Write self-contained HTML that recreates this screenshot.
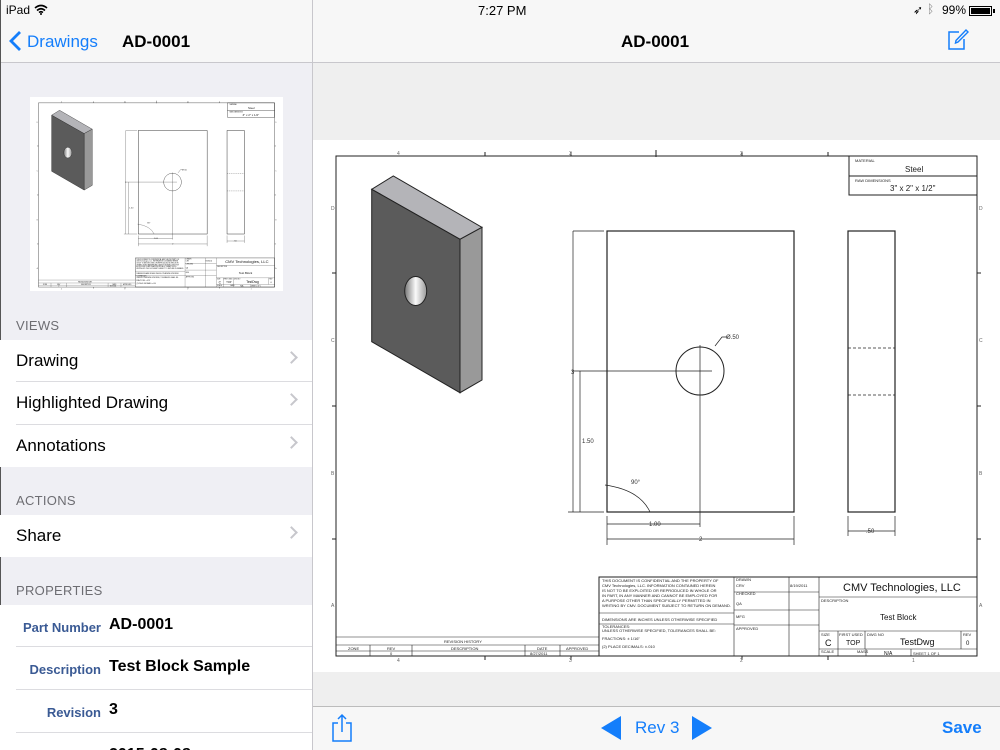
<!DOCTYPE html>
<html><head><meta charset="utf-8"><style>
*{margin:0;padding:0;box-sizing:border-box}
body{width:1000px;height:750px;overflow:hidden;background:#efeff4;font-family:"Liberation Sans",sans-serif;position:relative}
.abs{position:absolute}
#left{left:0;top:0;width:312px;height:750px;background:#efeff4;border-left:1px solid #555}
#div{left:312px;top:0;width:1px;height:750px;background:#c8c7cc}
.row{position:absolute;left:0;width:312px;background:#fff;font-size:17px;color:#000;overflow:hidden}
.row span{position:absolute;left:16px;top:11px}
.chev{position:absolute;right:16px;top:13px;width:9px;height:9px;border-right:2px solid #c7c7cc;border-top:2px solid #c7c7cc;transform:rotate(45deg)}
.sep{position:absolute;left:16px;right:0;bottom:0;height:1px;background:#dcdce0}
.hdr{position:absolute;left:16px;font-size:13px;color:#6d6d72;letter-spacing:.3px}
.lab{position:absolute;right:211px;top:15px;font-size:13px;font-weight:bold;color:#3a5a94}
.val{position:absolute;left:109px;top:11px;font-size:16px;font-weight:bold}
</style></head><body>
<div id="left" class="abs">
 <div class="abs" style="left:0;top:0;width:312px;height:63px;background:#f7f7f7;border-bottom:1px solid #c8c7cc"></div>
</div>
<div id="div" class="abs"></div>
<div class="abs" style="left:313px;top:0;width:687px;height:63px;background:#f7f7f7;border-bottom:1px solid #c8c7cc"></div>
<div class="abs" style="left:313px;top:63px;width:687px;height:644px;background:#efefef"></div>
<div class="abs" style="left:313px;top:140px;width:687px;height:532px;background:#fff"></div>
<div class="abs" style="left:313px;top:706px;width:687px;height:44px;background:#f7f7f7;border-top:1px solid #bcbcbc"></div>
<div class="abs" style="left:30px;top:97px;width:253px;height:194px;background:#fff"></div>

<div class="abs" style="left:6px;top:3px;font-size:12px">iPad</div>
<svg class="abs" style="left:34px;top:4px" width="14" height="11" viewBox="0 0 14 11"><path d="M1 4Q7-1 13 4M3 6.5Q7 3 11 6.5M5 8.5Q7 7 9 8.5" stroke="#000" stroke-width="1.6" fill="none"/><circle cx="7" cy="10" r="1" fill="#000"/></svg>
<div class="abs" style="left:478px;top:3px;font-size:13px">7:27 PM</div>
<div class="abs" style="left:913px;top:3px;font-size:12px">➶</div>
<div class="abs" style="left:927px;top:2px;font-size:12px;color:#888">ᛒ</div>
<div class="abs" style="left:942px;top:3px;font-size:12px">99%</div>
<div class="abs" style="left:969px;top:6px;width:23px;height:10px;border:1px solid #000;padding:1px"><div style="width:100%;height:100%;background:#000"></div></div>
<div class="abs" style="left:993px;top:9px;width:2px;height:4px;background:#000"></div>

<svg class="abs" style="left:8px;top:30px" width="14" height="22"><path d="M12 2L3 11L12 20" stroke="#147efb" stroke-width="2.8" fill="none"/></svg>
<div class="abs" style="left:27px;top:32px;font-size:17px;color:#147efb">Drawings</div>
<div class="abs" style="left:122px;top:32px;font-size:17px;font-weight:bold">AD-0001</div>
<div class="abs" style="left:621px;top:32px;font-size:17px;font-weight:bold">AD-0001</div>
<svg class="abs" style="left:946px;top:28px" width="24" height="24" viewBox="0 0 24 24"><path d="M13 4H3V21H18V11" stroke="#147efb" stroke-width="1.5" fill="none"/><path d="M20 2L22 4L12 14L9.5 15L10 12.5Z" stroke="#147efb" stroke-width="1.4" fill="none"/></svg>

<div class="hdr" style="top:318px">VIEWS</div>
<div class="row" style="top:340px;height:42px"><span>Drawing</span><i class="chev"></i><i class="sep"></i></div>
<div class="row" style="top:382px;height:43px"><span>Highlighted Drawing</span><i class="chev"></i><i class="sep"></i></div>
<div class="row" style="top:425px;height:42px"><span>Annotations</span><i class="chev"></i></div>
<div class="hdr" style="top:493px">ACTIONS</div>
<div class="row" style="top:515px;height:42px"><span>Share</span><i class="chev"></i></div>
<div class="hdr" style="top:583px">PROPERTIES</div>
<div class="row" style="top:605px;height:145px">
 <div class="abs" style="top:0;left:0;width:312px;height:42px"><b class="lab">Part Number</b><b class="val">AD-0001</b><i class="sep"></i></div>
 <div class="abs" style="top:42px;left:0;width:312px;height:43px"><b class="lab">Description</b><b class="val">Test Block Sample</b><i class="sep"></i></div>
 <div class="abs" style="top:85px;left:0;width:312px;height:43px"><b class="lab">Revision</b><b class="val">3</b><i class="sep"></i></div>
 <div class="abs" style="top:128px;left:0;width:312px;height:43px"><b class="val" style="top:13px">2015-08-08</b></div>
</div>

<svg class="abs" style="left:330px;top:713px" width="24" height="30" viewBox="0 0 24 30"><path d="M8 10H3V28H21V10H16M12 2V19M8 6L12 2L16 6" stroke="#147efb" stroke-width="1.5" fill="none"/></svg>
<svg class="abs" style="left:601px;top:716px" width="20" height="24"><path d="M20 0V24L0 12Z" fill="#147efb"/></svg>
<div class="abs" style="left:635px;top:718px;font-size:17px;color:#147efb">Rev 3</div>
<svg class="abs" style="left:692px;top:716px" width="20" height="24"><path d="M0 0V24L20 12Z" fill="#147efb"/></svg>
<div class="abs" style="left:942px;top:718px;font-size:17px;font-weight:bold;color:#147efb">Save</div>

<svg class="abs" style="left:0;top:0" width="1000" height="750" font-family="Liberation Sans">
<defs>
<linearGradient id="hg" x1="0" y1="0" x2="1" y2="0"><stop offset="0" stop-color="#777"/><stop offset=".5" stop-color="#fafafa"/><stop offset="1" stop-color="#999"/></linearGradient>
<g id="dwg" fill="none" stroke="#222" stroke-width="1">
 <rect x="336" y="156" width="641" height="500"/>
 <path d="M485 152V156M571 152V156M656 150V157M742 152V156M828 152V156M485 656V660M571 656V660M742 656V660M828 656V660M332 273H336M332 406H336M332 539H336M977 273H981M977 406H981M977 539H981" />
 <g fill="#666" stroke="none" font-size="5"><text x="397" y="155">4</text><text x="569" y="155">3</text><text x="740" y="155">2</text><text x="397" y="662">4</text><text x="569" y="662">3</text><text x="740" y="662">2</text><text x="912" y="662">1</text><text x="331" y="210">D</text><text x="331" y="342">C</text><text x="331" y="475">B</text><text x="331" y="607">A</text><text x="979" y="210">D</text><text x="979" y="342">C</text><text x="979" y="475">B</text><text x="979" y="607">A</text></g>
 <polygon points="371.7,189.3 393.3,176 482,227.3 460,239.3" fill="#b4b4b8"/>
 <polygon points="460,239.3 482,227.3 482,380 460,392.7" fill="#999"/>
 <polygon points="371.7,189.3 460,239.3 460,392.7 371.7,341.7" fill="#5b5b5b"/>
 <ellipse cx="415.7" cy="291" rx="11" ry="14.5" fill="url(#hg)"/>
 <rect x="607" y="231" width="187" height="281" stroke-width="1.2"/>
 <circle cx="700" cy="371" r="24"/>
 <path d="M573 231H604M573 231V512M568 512H604M580 371V512M572 371H712M700 345V527M607 516V545M794 516V545M607 524H700M607 539H794M605 485Q640 490 650 512M715 346L722 337H728" stroke-width=".7"/>
 <g fill="#333" stroke="none" font-size="6"><text x="582" y="443">1.50</text><text x="649" y="526">1.00</text><text x="699" y="541">2</text><text x="631" y="484">90°</text><text x="726" y="339">Ø.50</text><text x="571" y="374">3</text><text x="866" y="533">.50</text></g>
 <rect x="848" y="231" width="47" height="281" stroke-width="1.2"/>
 <path d="M848 348H895M848 395H895" stroke-dasharray="3 2" stroke-width=".7"/>
 <path d="M848 516V536M895 516V536M848 531H895" stroke-width=".7"/>
 <rect x="849" y="156" width="128" height="39"/><path d="M849 176H977"/>
 <g fill="#222" stroke="none"><text x="855" y="162" font-size="4">MATERIAL</text><text x="905" y="172" font-size="8">Steel</text><text x="855" y="182" font-size="4">RAW DIMENSIONS</text><text x="890" y="191" font-size="8">3" x 2" x 1/2"</text></g>
 <rect x="599" y="577" width="378" height="79"/>
 <path d="M734 577V656M789 577V656M819 577V656M599 613H734M599 624H734M734 592H819M734 610H819M734 625H819M819 597H977M819 631H977M819 649H977M838 631V656M865 631V649M866 649V656M911 649V656M961 631V649M599 637H336M336 645H599M370 645V656M412 645V656M525 645V656M560 645V656M336 651H599" stroke-width=".6"/>
 <g fill="#222" stroke="none" font-size="4"><text x="602" y="582">THIS DOCUMENT IS CONFIDENTIAL AND THE PROPERTY OF</text><text x="602" y="587">CMV Technologies, LLC. INFORMATION CONTAINED HEREIN</text><text x="602" y="592">IS NOT TO BE EXPLOITED OR REPRODUCED IN WHOLE OR</text><text x="602" y="597">IN PART, IN ANY MANNER AND CANNOT BE EMPLOYED FOR</text><text x="602" y="602">A PURPOSE OTHER THAN SPECIFICALLY PERMITTED IN</text><text x="602" y="607">WRITING BY CMV. DOCUMENT SUBJECT TO RETURN ON DEMAND.</text><text x="602" y="621">DIMENSIONS ARE INCHES UNLESS OTHERWISE SPECIFIED</text><text x="602" y="628">TOLERANCES:</text><text x="602" y="632">UNLESS OTHERWISE SPECIFIED, TOLERANCES SHALL BE:</text><text x="602" y="640">FRACTIONS: ± 1/16"</text><text x="602" y="648">(2) PLACE DECIMALS: ±.010</text><text x="736" y="581">DRAWN</text><text x="736" y="587">CRV</text><text x="790" y="587">8/19/2011</text><text x="736" y="595">CHECKED</text><text x="736" y="605">QA</text><text x="736" y="618">MFG</text><text x="736" y="630">APPROVED</text><text x="821" y="602">DESCRIPTION</text><text x="821" y="636">SIZE</text><text x="839" y="636">FIRST USED</text><text x="867" y="636">DWG NO</text><text x="963" y="636">REV</text><text x="821" y="653">SCALE</text><text x="857" y="653">MASS</text><text x="913" y="655">SHEET 1 OF 1</text><text x="444" y="643">REVISION HISTORY</text><text x="348" y="650">ZONE</text><text x="387" y="650">REV</text><text x="451" y="650">DESCRIPTION</text><text x="537" y="650">DATE</text><text x="566" y="650">APPROVED</text><text x="390" y="655">0</text><text x="530" y="655">8/27/2011</text></g>
 <g fill="#111" stroke="none"><text x="843" y="591" font-size="11">CMV Technologies, LLC</text><text x="880" y="620" font-size="8">Test Block</text><text x="825" y="646" font-size="9">C</text><text x="846" y="645" font-size="7">TOP</text><text x="900" y="645" font-size="9">TestDwg</text><text x="966" y="645" font-size="6">0</text><text x="884" y="655" font-size="5">N/A</text></g>
</g>
</defs>
<use href="#dwg"/>
<use href="#dwg" transform="translate(30,97) scale(0.3683) translate(-313,-140)"/>
</svg>
</body></html>
